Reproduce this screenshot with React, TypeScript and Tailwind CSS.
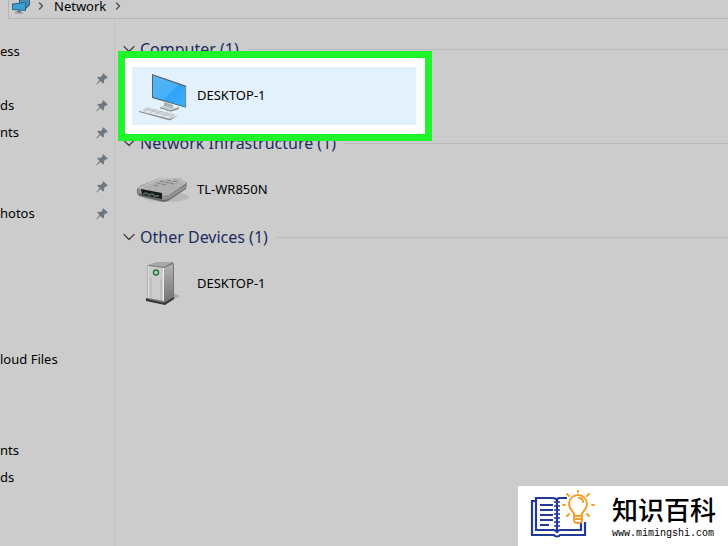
import React from "react";
import { ChevronDown, ChevronRight } from "lucide-react";

type SidebarEntry = {
  label: string;
  pinned?: boolean;
  className?: string;
};

const SIDEBAR_ENTRIES: SidebarEntry[] = [
  { label: "ess" },
  { label: "", pinned: true },
  { label: "ds", pinned: true },
  { label: "nts", pinned: true },
  { label: "", pinned: true },
  { label: "", pinned: true },
  { label: "hotos", pinned: true },
  { label: "loud Files", className: "mt-[119px]" },
  { label: "nts", className: "mt-16" },
  { label: "ds" },
];

const PinIcon = () => (
  <svg viewBox="0 0 14 14" className="h-3.5 w-3.5" fill="#6d7780">
    <path d="M8.2 1.2 12.8 5.6 11.6 6.4 10.8 6.2 8.9 8.2 9.1 10.7 8 11.4 5.5 9 1.6 12.6 1.1 12.2 4.6 8.1 2.3 5.8 3.2 4.8 5.8 5 7.7 3.1 7.4 2.1Z" />
  </svg>
);

const NetworkIcon = () => (
  <svg viewBox="0 0 20 15" className="h-[15px] w-5">
    <path d="M8 0h11v5l-4 4H8Z" fill="#345f7d" />
    <path d="M9 0h9v4l-3 3H9Z" fill="#4b8db5" />
    <path d="M1 3.500 15 2v9L1 10Z" fill="#2b668d" />
    <path d="M2 4.500 14 3v7L2 9Z" fill="#3ca0d4" />
    <path d="M6 10.500h4v2H6Z" fill="#577284" />
    <path d="M4 12.500h8v1H4Z" fill="#768b98" />
  </svg>
);

const ComputerIcon = () => (
  <svg viewBox="-1 0 50 50" className="h-[50px] w-[50px]">
    <defs>
      <linearGradient id="screen" x1="0" y1="0" x2="1" y2="1">
        <stop offset="0" stopColor="#57b5f0" />
        <stop offset="0.55" stopColor="#45b0fa" />
        <stop offset="0.56" stopColor="#2fa3f7" />
        <stop offset="1" stopColor="#36b1ff" />
      </linearGradient>
    </defs>
    <path d="M25 31 34 34v4l-9-2Z" fill="#a9b0b4" />
    <path d="M21 36c2-2 8-1 13 1 4-1 8-1 6 1-3 2-7 3-10 2Z" fill="#c8cdd0" />
    <path d="M21 37c4 0 7 3 11 3l8-3" fill="none" stroke="#798187" />
    <path d="M13 3 48 15v22L13 27Z" fill="#53616b" />
    <path d="M14 4.500 46 15.700v20L14 26Z" fill="url(#screen)" />
    <path d="M46.700 15.500 48 15v22l-1.300.7Z" fill="#d9e1e6" />
    <path d="M8 36 39 44l-8 5L0 40Z" fill="#e2e5e7" />
    <path d="m0 40 31 8 8-4-8 5.500L0 41Z" fill="#848b90" />
    <path d="m5 38 27 7M8 37l27 7M11 37l-6 4m12-3-6 4m12-2-6 3m12-1-6 4m12-2-6 4" stroke="#b3b9bc" strokeWidth="0.8" />
  </svg>
);

const RouterIcon = () => (
  <svg viewBox="0 0 54 28" className="h-7 w-[54px]">
    <ellipse cx="30" cy="21" rx="23" ry="5" fill="#aaaaaa" opacity="0.6" />
    <path d="M1 13 4 10 24 2h19l8 5-1 6-18 12-5 1-24-6-2-3Z" fill="#686868" />
    <path d="M1 12 23 2h20l8 5-18 12-5 1Z" fill="#b0b0b0" />
    <path d="m2 12 26 8 5-1L51 8l-1 4-17 11-5 1L2 17Z" fill="#929292" />
    <path d="m5 13 21 4v6L6 19Z" fill="#171b1b" />
    <path d="m7 18 3-1 3 2 3-1 3 2h4" fill="none" stroke="#4b6059" strokeWidth="2" />
    <path d="m24 5 4 1m3-2 4 1m3-2 4 1M21 7l4 1m4-2 4 1m4-2 4 1M18 9l4 1m4-2 4 1m4-2 4 1" stroke="#828282" strokeWidth="1.200" />
    <path d="m3 12 21-9h19l6 4" fill="none" stroke="#d2d2d2" strokeWidth="0.8" />
  </svg>
);

const ServerIcon = () => (
  <svg viewBox="0 0 42 46" className="h-[46px] w-[42px]">
    <defs>
      <linearGradient id="side" x1="0" y1="0" x2="0" y2="1">
        <stop offset="0" stopColor="#b4b4b4" />
        <stop offset="1" stopColor="#727272" />
      </linearGradient>
    </defs>
    <path d="m22 44 16-9-7-3Z" fill="#888888" opacity="0.5" />
    <path d="m4 37 18 4 10-6v3l-9 6L4 40Z" fill="#353535" />
    <path d="M5 5 15 1h16l1 3v32l-10 6L5 38Z" fill="#767676" />
    <path d="M6 5 22 7v33L6 37Z" fill="#cccccc" />
    <path d="m22 7 9-4v32l-9 6Z" fill="url(#side)" />
    <path d="m6 4 9-3h16l-9 5Z" fill="#a8a8a8" />
    <path d="M9 17v20m10-19v21" stroke="#b0b0b0" />
    <path d="M6 5v32M21.500 7v33" stroke="#eeeeee" />
    <circle cx="14" cy="11.500" r="2.500" fill="#b9d4b8" stroke="#287934" strokeWidth="1.500" />
  </svg>
);

const BookIcon = () => (
  <svg viewBox="0 0 66 50" className="h-[50px] w-[66px]" fill="none">
    <g stroke="#20399a" strokeWidth="2.200">
      <path d="M5 11H2v34h22c1 2 5 2 6 0h25V32" />
      <path d="M37 8H30c-2 0-3 1-3 2-1-1-2-2-4-2H6v32h17c2 0 4 1 4 3 0-2 2-3 4-3h20v-8" />
      <path d="M10 15h13M10 20h13M10 25h13M10 30h13M10 35h9" />
      <path d="M27 9v34" />
      <path d="M24 12h6m-6 4h6m-6 4h6m-6 4h6m-6 4h6m-6 4h6m-6 4h6" strokeWidth="1.500" />
    </g>
    <g stroke="#f59d2a" strokeWidth="2" strokeLinecap="round">
      <path d="M45 26c-1-5-6-6-6-12a9 9 0 0 1 18 0c0 6-5 7-6 12Z" />
      <path d="M44 26v4c0 2 2 3 4 3s4-1 4-3v-4m-8 3h8m-3-21c3 0 4 2 4 4" />
      <path d="M48 1v1M37 4l2 2m20-2-2 2M33 15h2m27 0h2M37 26l2-2m20 2-2-2" />
    </g>
  </svg>
);

const DEVICE_GROUPS = [
  { title: "Computer (1)", device: "DESKTOP-1", Icon: ComputerIcon, highlighted: true },
  { title: "Network Infrastructure (1)", device: "TL-WR850N", Icon: RouterIcon },
  { title: "Other Devices (1)", device: "DESKTOP-1", Icon: ServerIcon },
];

const AddressBar = () => (
  <nav
    aria-label="Address"
    className="ml-2 flex h-[19px] items-start border-b border-l border-[#b5b5b5] pl-0.5"
  >
    <NetworkIcon />
    <ChevronRight size={12} strokeWidth={3} className="ml-1 text-[#555]" />
    <button className="ml-[7px] h-3 text-[13px] leading-3">Network</button>
    <ChevronRight size={12} strokeWidth={3} className="ml-1.5 text-[#555]" />
  </nav>
);

const Sidebar = () => (
  <aside className="w-[115px] shrink-0 border-r border-[#c2c2c2] pt-[19px]">
    <ul>
      {SIDEBAR_ENTRIES.map((entry, index) => (
        <li
          key={index}
          className={`flex h-[27px] items-center justify-between pr-[5px] text-[13px] ${entry.className ?? ""}`}
        >
          <span>{entry.label}</span>
          {entry.pinned && <PinIcon />}
        </li>
      ))}
    </ul>
  </aside>
);

export default function App() {
  return (
    <div className="relative flex min-h-screen flex-col overflow-hidden bg-[#cccccc] font-['Noto_Sans','Segoe_UI',sans-serif] text-black">
      <AddressBar />
      <div className="flex flex-1">
        <Sidebar />
        <main className="min-w-0 flex-1 pt-[18px] pl-1">
          {DEVICE_GROUPS.map(({ title, device, Icon, highlighted }) => (
            <section key={title} className="pb-1.5">
              <h2 className="flex h-6 items-center text-[16px] text-[#202c5c]">
                <ChevronDown size={20} strokeWidth={1.5} className="mr-px shrink-0 text-[#444]" />
                <span className="whitespace-nowrap">{title}</span>
                <span className="ml-2 h-px flex-1 bg-[#bcbcbc]" />
              </h2>
              <div className="relative mt-1.5 ml-[13px] w-[284px]">
                {highlighted && (
                  <div className="absolute -inset-y-4 -right-4 -left-3.5 border-[7px] border-[#20f52b] bg-white" />
                )}
                <button
                  className={`relative flex h-[58px] w-full items-center text-left text-[13px] ${
                    highlighted ? "bg-[#e3f1fc]" : ""
                  }`}
                >
                  <span className="mr-1 flex w-[61px] shrink-0 justify-center">
                    <Icon />
                  </span>
                  <span>{device}</span>
                </button>
              </div>
            </section>
          ))}
        </main>
      </div>
      <footer className="absolute right-0 bottom-0 flex h-[60px] w-[210px] items-start bg-white pt-1 pl-3">
        <BookIcon />
        <div className="ml-4 flex flex-col">
          <span className="font-['Noto_Sans_CJK_SC',sans-serif] text-[26px] leading-[38px] font-medium whitespace-nowrap text-black">
            知识百科
          </span>
          <a href="#" className="font-['Liberation_Mono',monospace] text-[10px] leading-3 text-black">
            www.mimingshi.com
          </a>
        </div>
      </footer>
    </div>
  );
}
